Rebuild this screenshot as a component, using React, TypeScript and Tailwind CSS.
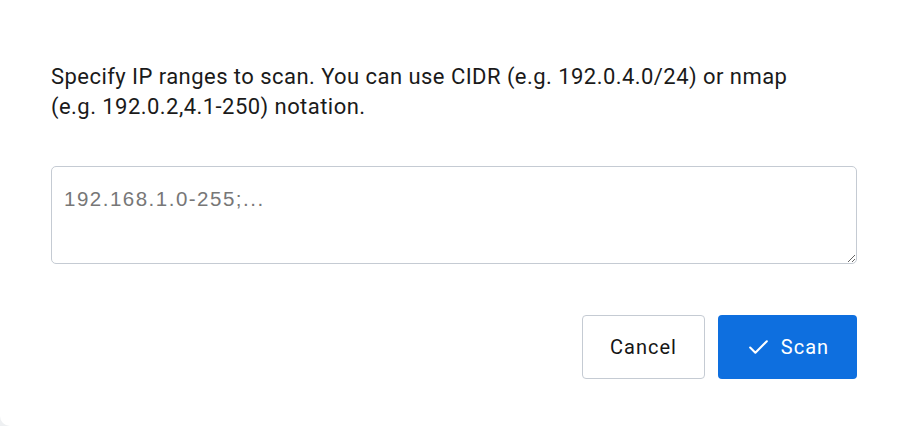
import { Check } from 'lucide-react'

export default function App() {
  return (
    <div className="w-[904px] h-[426px] bg-[#eef0f2] overflow-hidden">
      <div className="w-[904px] h-[426px] bg-white rounded-bl-[10px] pl-[51px] pr-[47px] pt-[62px] font-['Roboto',sans-serif]">
        {/* Description */}
        <p className="text-[22px] tracking-[0.45px] leading-[30px] text-[#1a1a1a] w-[745px]">
          Specify IP ranges to scan. You can use CIDR (e.g. 192.0.4.0/24) or nmap (e.g. 192.0.2,4.1-250) notation.
        </p>

        {/* Ranges input */}
        <textarea
          placeholder="192.168.1.0-255;..."
          className="mt-[44px] block w-[806px] h-[98px] border border-[#c5cbd3] rounded-[5px] px-[12px] py-[20px] text-[20.5px] tracking-[1.5px] leading-[24px] font-['Liberation_Sans',sans-serif] placeholder:text-[#777] outline-none"
        />

        {/* Actions */}
        <div className="mt-[51px] flex justify-end gap-[13px]">
          <button className="w-[123px] h-[64px] border border-[#c5cbd3] rounded-[4px] bg-white text-[20px] tracking-[1px] text-[#161616]">
            Cancel
          </button>
          <button className="w-[139px] h-[64px] rounded-[4px] bg-[#0e6fdf] text-white text-[20px] tracking-[1px] flex items-center justify-center gap-[10px]">
            <Check size={25} strokeWidth={2} />
            Scan
          </button>
        </div>
      </div>
    </div>
  )
}
